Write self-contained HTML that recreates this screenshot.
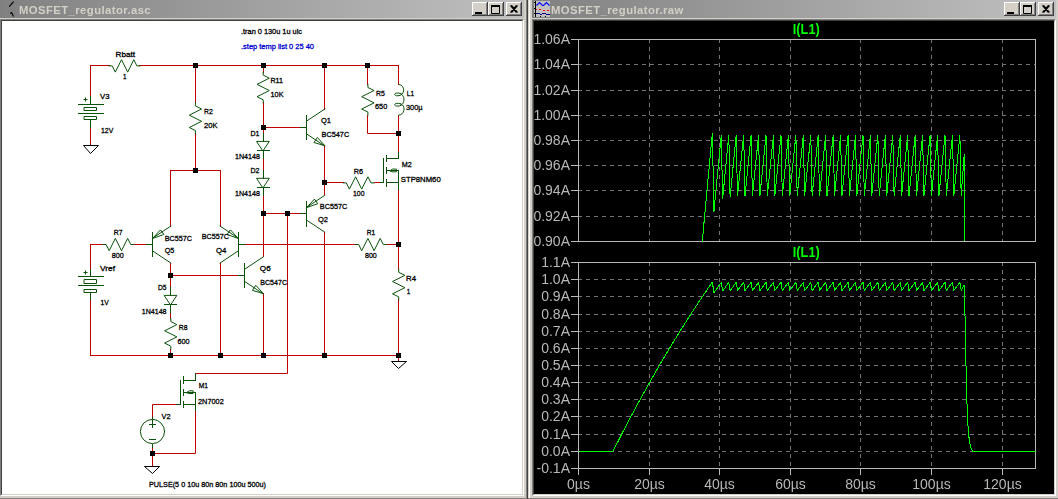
<!DOCTYPE html>
<html lang="en">
<head>
<meta charset="utf-8">
<title>LTspice IV - MOSFET_regulator</title>
<style>
html,body{margin:0;padding:0;}
body{width:1058px;height:499px;overflow:hidden;position:relative;background:#d4d0c8;font-family:"Liberation Sans",Arial,sans-serif;}
.abs{position:absolute;}
.tbar{position:absolute;top:0;height:18px;background:linear-gradient(to right,#808080 0%,#868686 8%,#c0c0c0 100%);}
.ttl{position:absolute;will-change:transform;top:3px;font-size:11.3px;line-height:14px;font-weight:bold;color:#d4d0c8;white-space:nowrap;letter-spacing:0.42px;}
.btn{position:absolute;top:2px;width:16px;height:14px;background:#d4d0c8;box-sizing:border-box;
 box-shadow:inset -1px -1px 0 #404040,inset 1px 1px 0 #fff,inset -2px -2px 0 #808080;}
.btn svg{position:absolute;left:0;top:0;}
.edge{position:absolute;box-sizing:border-box;border-style:solid;border-width:1px;}
.sch,.plt{position:absolute;left:0;top:0;display:block;}
</style>
</head>
<body>
<!-- ===== left MDI child: schematic ===== -->
<div class="tbar" style="left:0;width:524px;"></div>
<svg class="abs" style="left:0;top:0" width="18" height="18" viewBox="0 0 18 18"><path d="M13.6 1.6 L9.2 6.6 M10.2 13.4 L11.6 12.6 L13.6 16.4" stroke="#000" stroke-width="1.1" fill="none"/></svg>
<div class="ttl" style="left:19.2px;">MOSFET_regulator.asc</div>
<div class="btn" style="left:472px;"><svg width="16" height="14"><rect x="3" y="10" width="7" height="2" fill="#000"/></svg></div>
<div class="btn" style="left:488px;"><svg width="16" height="14"><path d="M3.5 3.5 H11.5 V11.5 H3.5 Z" stroke="#000" stroke-width="1" fill="none"/><rect x="3" y="3" width="9" height="2" fill="#000"/></svg></div>
<div class="btn" style="left:506px;"><svg width="16" height="14"><path d="M4.5 3.5 L10.5 10.5 M5.5 3.5 L11.5 10.5 M10.5 3.5 L4.5 10.5 M11.5 3.5 L5.5 10.5" stroke="#000" stroke-width="1.2" fill="none"/></svg></div>
<div class="edge" style="left:0;top:19px;width:524px;height:477px;border-color:#808080 #fff #fff #808080;"></div>
<div class="edge" style="left:1px;top:20px;width:522px;height:475px;border-color:#404040 #d4d0c8 #d4d0c8 #404040;background:#fff;"></div>
<div class="abs" style="left:2px;top:21px;width:520px;height:473px;background:#fff;overflow:hidden;">
<svg class="sch" width="520" height="473" viewBox="2 21 520 473">
<g fill="none" stroke="#c00000" stroke-width="1" stroke-linecap="square">
<path d="M90.5 65.5 L109.5 65.5"/>
<path d="M139.5 65.5 L398.5 65.5"/>
<path d="M90.5 65.5 L90.5 96.5"/>
<path d="M90.5 139.5 L90.5 145.5"/>
<path d="M90.5 127.5 L90.5 139.5"/>
<path d="M195.5 65.5 L195.5 102.5"/>
<path d="M195.5 133.5 L195.5 170.5"/>
<path d="M170.5 170.5 L220.5 170.5"/>
<path d="M170.5 170.5 L170.5 226.5"/>
<path d="M220.5 170.5 L220.5 226.5"/>
<path d="M263.5 65.5 L263.5 72.5"/>
<path d="M263.5 102.5 L263.5 133.5"/>
<path d="M263.5 127.5 L300.5 127.5"/>
<path d="M263.5 158.5 L263.5 170.5"/>
<path d="M263.5 195.5 L263.5 256.5"/>
<path d="M263.5 213.5 L300.5 213.5"/>
<path d="M287.5 213.5 L287.5 373.5 L195.5 373.5"/>
<path d="M324.5 65.5 L324.5 109.5"/>
<path d="M324.5 145.5 L324.5 195.5"/>
<path d="M324.5 182.5 L343.5 182.5"/>
<path d="M374.5 182.5 L380.5 182.5"/>
<path d="M324.5 232.5 L324.5 355.5"/>
<path d="M367.5 65.5 L367.5 84.5"/>
<path d="M367.5 115.5 L367.5 133.5 L398.5 133.5"/>
<path d="M398.5 65.5 L398.5 84.5"/>
<path d="M398.5 115.5 L398.5 152.5"/>
<path d="M398.5 189.5 L398.5 269.5"/>
<path d="M398.5 299.5 L398.5 355.5"/>
<path d="M398.5 355.5 L398.5 361.5"/>
<path d="M386.5 244.5 L398.5 244.5"/>
<path d="M244.5 244.5 L355.5 244.5"/>
<path d="M170.5 263.5 L170.5 287.5"/>
<path d="M170.5 275.5 L238.5 275.5"/>
<path d="M170.5 312.5 L170.5 318.5"/>
<path d="M170.5 349.5 L170.5 355.5"/>
<path d="M220.5 263.5 L220.5 355.5"/>
<path d="M263.5 293.5 L263.5 355.5"/>
<path d="M133.5 244.5 L146.5 244.5"/>
<path d="M90.5 244.5 L103.5 244.5"/>
<path d="M90.5 244.5 L90.5 269.5"/>
<path d="M90.5 299.5 L90.5 355.5"/>
<path d="M90.5 355.5 L398.5 355.5"/>
<path d="M176.5 404.5 L152.5 404.5 L152.5 417.5"/>
<path d="M152.5 447.5 L152.5 460.5"/>
<path d="M195.5 410.5 L195.5 453.5 L152.5 453.5"/>
<path d="M152.5 460.5 L152.5 466.5"/>
</g>
<g fill="none" stroke="#0a520a" stroke-width="1" stroke-linecap="square" stroke-linejoin="miter">
<path d="M109.2 65.9 L112.3 65.9 L115.3 72.1 L121.5 59.7 L127.7 72.1 L133.8 59.7 L136.9 65.9 L140.0 65.9 M90.5 96.5 L90.5 104.5 M78.5 104.5 L103.5 104.5 M84.5 107.5 L96.5 107.5 L96.5 110.5 L84.5 110.5 Z M78.5 113.5 L103.5 113.5 M84.5 116.5 L96.5 116.5 L96.5 119.5 L84.5 119.5 Z M90.5 119.5 L90.5 127.5 M84.0 99.5 L87.0 99.5 M85.5 98.0 L85.5 101.0 M195.4 102.9 L195.4 105.9 L201.6 109.0 L189.3 115.2 L201.6 121.3 L189.3 127.5 L195.4 130.6 L195.4 133.7 M263.2 72.1 L263.2 75.1 L269.3 78.2 L257.0 84.4 L269.3 90.5 L257.0 96.7 L263.2 99.8 L263.2 102.9 M263.5 133.5 L263.5 141.5 M263.5 150.5 L263.5 158.5 M257.0 141.4 L269.3 141.4 L263.2 150.6 Z M257.5 150.5 L269.5 150.5 M263.5 170.5 L263.5 178.5 M263.5 187.5 L263.5 195.5 M257.0 178.3 L269.3 178.3 L263.2 187.6 Z M257.5 187.5 L269.5 187.5 M306.5 115.5 L306.5 139.5 M300.5 127.5 L306.5 127.5 M306.3 121.3 L324.8 109.0 M306.3 133.7 L324.8 146.0 M317.1 137.9 L314.0 142.5 L324.4 145.6 Z M343.3 182.9 L346.3 182.9 L349.4 189.1 L355.6 176.8 L361.7 189.1 L367.9 176.8 L371.0 182.9 L374.1 182.9 M398.5 182.5 L398.5 189.5 M386.5 182.5 L398.5 182.5 M386.5 155.5 L386.5 161.5 M386.5 167.5 L386.5 173.5 M386.5 179.5 L386.5 186.5 M380.5 182.5 L383.5 182.5 M383.5 158.5 L383.5 182.5 M398.5 158.5 L386.5 158.5 M398.5 152.5 L398.5 158.5 M398.5 170.5 L398.5 182.5 M386.5 170.5 L398.5 170.5 M390.2 170.6 L392.5 169.1 L396.4 169.1 L396.4 171.8 L392.5 171.8 Z M306.5 226.5 L306.5 201.5 M300.5 213.5 L306.5 213.5 M306.3 219.9 L324.8 232.2 M306.3 207.6 L324.8 195.3 M307.1 207.2 L314.4 199.1 L317.5 203.3 Z M367.9 84.4 L367.9 87.5 L374.1 90.5 L361.7 96.7 L374.1 102.9 L361.7 109.0 L367.9 112.1 L367.9 115.2 M398.7 269.2 L398.7 272.3 L404.9 275.3 L392.5 281.5 L404.9 287.7 L392.5 293.8 L398.7 296.9 L398.7 300.0 M355.6 244.5 L358.7 244.5 L361.7 250.7 L367.9 238.4 L374.1 250.7 L380.2 238.4 L383.3 244.5 L386.4 244.5 M152.5 256.5 L152.5 232.5 M146.5 244.5 L152.5 244.5 M152.3 250.7 L170.8 263.0 M152.3 238.4 L170.8 226.1 M153.1 238.0 L160.4 229.9 L163.5 234.1 Z M170.5 287.5 L170.5 295.5 M170.5 304.5 L170.5 312.5 M164.6 295.4 L176.9 295.4 L170.8 304.6 Z M164.5 304.5 L176.5 304.5 M170.8 318.5 L170.8 321.5 L176.9 324.6 L164.6 330.8 L176.9 336.9 L164.6 343.1 L170.8 346.2 L170.8 349.3 M238.5 256.5 L238.5 232.5 M244.5 244.5 L238.5 244.5 M238.5 250.7 L220.1 263.0 M238.5 238.4 L220.1 226.1 M237.8 238.0 L230.5 229.9 L227.4 234.1 Z M244.5 263.5 L244.5 287.5 M238.5 275.5 L244.5 275.5 M244.7 269.2 L263.2 256.9 M244.7 281.5 L263.2 293.8 M255.5 285.7 L252.4 290.4 L262.8 293.4 Z M103.0 244.5 L106.1 244.5 L109.2 250.7 L115.3 238.4 L121.5 250.7 L127.7 238.4 L130.7 244.5 L133.8 244.5 M90.5 269.5 L90.5 276.5 M78.5 276.5 L103.5 276.5 M84.5 279.5 L96.5 279.5 L96.5 283.5 L84.5 283.5 Z M78.5 285.5 L103.5 285.5 M84.5 289.5 L96.5 289.5 L96.5 292.5 L84.5 292.5 Z M90.5 292.5 L90.5 299.5 M84.0 272.5 L87.0 272.5 M85.5 271.0 L85.5 274.0 M195.5 404.5 L195.5 410.5 M183.5 404.5 L195.5 404.5 M183.5 376.5 L183.5 383.5 M183.5 389.5 L183.5 395.5 M183.5 401.5 L183.5 407.5 M176.5 404.5 L180.5 404.5 M180.5 380.5 L180.5 404.5 M195.5 380.5 L183.5 380.5 M195.5 373.5 L195.5 380.5 M195.5 392.5 L195.5 404.5 M183.5 392.5 L195.5 392.5 M186.9 392.4 L189.3 390.8 L193.1 390.8 L193.1 393.5 L189.3 393.5 Z M152.5 417.5 L152.5 420.5 M152.5 444.5 L152.5 447.5 M149.5 424.5 L155.5 424.5 M152.5 421.5 L152.5 427.5 M149.5 439.5 L155.5 439.5"/>
<path d="M398.5 84.4 C405.5 84.9 405.5 95.6 398.0 95.8 C393.5 96.1 393.5 92.4 398.5 93.1 L401.5 93.6 M400.5 94.1 C405.5 95.1 405.5 105.9 398.0 106.1 C393.5 106.4 393.5 102.7 398.5 103.4 L401.5 103.9 M400.5 104.4 C405.5 104.4 405.5 114.7 398.5 115.2" stroke-linecap="butt"/>
<circle cx="152.5" cy="431.5" r="12.1"/>
</g>
<g fill="#fff" stroke="#000" stroke-width="1">
<path d="M83.5 145.5 L98.5 145.5 L90.5 153.5 Z"/>
<path d="M391.5 361.5 L406.5 361.5 L398.5 368.5 Z"/>
<path d="M144.5 466.5 L159.5 466.5 L152.5 473.5 Z"/>
</g>
<g fill="#000">
<rect x="193.0" y="63.0" width="5" height="5"/>
<rect x="261.0" y="63.0" width="5" height="5"/>
<rect x="322.0" y="63.0" width="5" height="5"/>
<rect x="365.0" y="63.0" width="5" height="5"/>
<rect x="193.0" y="168.0" width="5" height="5"/>
<rect x="261.0" y="125.0" width="5" height="5"/>
<rect x="261.0" y="211.0" width="5" height="5"/>
<rect x="285.0" y="211.0" width="5" height="5"/>
<rect x="322.0" y="180.0" width="5" height="5"/>
<rect x="396.0" y="131.0" width="5" height="5"/>
<rect x="396.0" y="242.0" width="5" height="5"/>
<rect x="396.0" y="353.0" width="5" height="5"/>
<rect x="168.0" y="273.0" width="5" height="5"/>
<rect x="168.0" y="353.0" width="5" height="5"/>
<rect x="218.0" y="353.0" width="5" height="5"/>
<rect x="261.0" y="353.0" width="5" height="5"/>
<rect x="322.0" y="353.0" width="5" height="5"/>
<rect x="150.0" y="451.0" width="5" height="5"/>
</g>
<g font-family="'Liberation Sans', Arial, sans-serif" stroke-width="0.3">
<text x="115.5" y="56.9" font-size="7.8" fill="#000" stroke="#000" text-anchor="start" textLength="19.5" lengthAdjust="spacingAndGlyphs">Rbatt</text>
<text x="123" y="78.9" font-size="7.8" fill="#000" stroke="#000" text-anchor="start" textLength="3.5" lengthAdjust="spacingAndGlyphs">1</text>
<text x="100" y="99.1" font-size="7.8" fill="#000" stroke="#000" text-anchor="start" textLength="9.5" lengthAdjust="spacingAndGlyphs">V3</text>
<text x="101" y="133.1" font-size="7.8" fill="#000" stroke="#000" text-anchor="start" textLength="12.2" lengthAdjust="spacingAndGlyphs">12V</text>
<text x="204" y="114.1" font-size="7.8" fill="#000" stroke="#000" text-anchor="start" textLength="8.7" lengthAdjust="spacingAndGlyphs">R2</text>
<text x="204" y="128.2" font-size="7.8" fill="#000" stroke="#000" text-anchor="start" textLength="13.5" lengthAdjust="spacingAndGlyphs">20K</text>
<text x="270.5" y="83.1" font-size="7.8" fill="#000" stroke="#000" text-anchor="start" textLength="12.5" lengthAdjust="spacingAndGlyphs">R11</text>
<text x="270.5" y="97.1" font-size="7.8" fill="#000" stroke="#000" text-anchor="start" textLength="13" lengthAdjust="spacingAndGlyphs">10K</text>
<text x="376" y="95.9" font-size="7.8" fill="#000" stroke="#000" text-anchor="start" textLength="8.8" lengthAdjust="spacingAndGlyphs">R5</text>
<text x="375" y="109.1" font-size="7.8" fill="#000" stroke="#000" text-anchor="start" textLength="12.2" lengthAdjust="spacingAndGlyphs">650</text>
<text x="406.8" y="95.9" font-size="7.8" fill="#000" stroke="#000" text-anchor="start" textLength="7.2" lengthAdjust="spacingAndGlyphs">L1</text>
<text x="406" y="110.4" font-size="7.8" fill="#000" stroke="#000" text-anchor="start" textLength="16.6" lengthAdjust="spacingAndGlyphs">300µ</text>
<text x="321" y="123.1" font-size="7.8" fill="#000" stroke="#000" text-anchor="start" textLength="10" lengthAdjust="spacingAndGlyphs">Q1</text>
<text x="321.5" y="136.9" font-size="7.8" fill="#000" stroke="#000" text-anchor="start" textLength="27.7" lengthAdjust="spacingAndGlyphs">BC547C</text>
<text x="259.5" y="135.9" font-size="7.8" fill="#000" stroke="#000" text-anchor="end" textLength="9" lengthAdjust="spacingAndGlyphs">D1</text>
<text x="260" y="159.4" font-size="7.8" fill="#000" stroke="#000" text-anchor="end" textLength="25" lengthAdjust="spacingAndGlyphs">1N4148</text>
<text x="259.5" y="172.7" font-size="7.8" fill="#000" stroke="#000" text-anchor="end" textLength="9" lengthAdjust="spacingAndGlyphs">D2</text>
<text x="260" y="196.1" font-size="7.8" fill="#000" stroke="#000" text-anchor="end" textLength="25" lengthAdjust="spacingAndGlyphs">1N4148</text>
<text x="353.7" y="174.1" font-size="7.8" fill="#000" stroke="#000" text-anchor="start" textLength="9.3" lengthAdjust="spacingAndGlyphs">R6</text>
<text x="353" y="196.1" font-size="7.8" fill="#000" stroke="#000" text-anchor="start" textLength="11.5" lengthAdjust="spacingAndGlyphs">100</text>
<text x="401.8" y="167.2" font-size="7.8" fill="#000" stroke="#000" text-anchor="start" textLength="10" lengthAdjust="spacingAndGlyphs">M2</text>
<text x="400.8" y="182.2" font-size="7.8" fill="#000" stroke="#000" text-anchor="start" textLength="39.9" lengthAdjust="spacingAndGlyphs">STP8NM60</text>
<text x="319.8" y="209.1" font-size="7.8" fill="#000" stroke="#000" text-anchor="start" textLength="27.5" lengthAdjust="spacingAndGlyphs">BC557C</text>
<text x="318" y="222.1" font-size="7.8" fill="#000" stroke="#000" text-anchor="start" textLength="10" lengthAdjust="spacingAndGlyphs">Q2</text>
<text x="113.8" y="235.2" font-size="7.8" fill="#000" stroke="#000" text-anchor="start" textLength="8.7" lengthAdjust="spacingAndGlyphs">R7</text>
<text x="111.8" y="257.7" font-size="7.8" fill="#000" stroke="#000" text-anchor="start" textLength="12" lengthAdjust="spacingAndGlyphs">800</text>
<text x="366.8" y="235.4" font-size="7.8" fill="#000" stroke="#000" text-anchor="start" textLength="8.5" lengthAdjust="spacingAndGlyphs">R1</text>
<text x="365" y="257.7" font-size="7.8" fill="#000" stroke="#000" text-anchor="start" textLength="11.8" lengthAdjust="spacingAndGlyphs">800</text>
<text x="164.7" y="241.1" font-size="7.8" fill="#000" stroke="#000" text-anchor="start" textLength="27.3" lengthAdjust="spacingAndGlyphs">BC557C</text>
<text x="164.7" y="252.9" font-size="7.8" fill="#000" stroke="#000" text-anchor="start" textLength="9.6" lengthAdjust="spacingAndGlyphs">Q5</text>
<text x="201.7" y="238.7" font-size="7.8" fill="#000" stroke="#000" text-anchor="start" textLength="27.3" lengthAdjust="spacingAndGlyphs">BC557C</text>
<text x="216" y="252.9" font-size="7.8" fill="#000" stroke="#000" text-anchor="start" textLength="10.4" lengthAdjust="spacingAndGlyphs">Q4</text>
<text x="259.8" y="270.9" font-size="7.8" fill="#000" stroke="#000" text-anchor="start" textLength="10.9" lengthAdjust="spacingAndGlyphs">Q6</text>
<text x="260.3" y="285.4" font-size="7.8" fill="#000" stroke="#000" text-anchor="start" textLength="26.7" lengthAdjust="spacingAndGlyphs">BC547C</text>
<text x="100" y="271.3" font-size="7.8" fill="#000" stroke="#000" text-anchor="start" textLength="15" lengthAdjust="spacingAndGlyphs">Vref</text>
<text x="100.5" y="305.1" font-size="7.8" fill="#000" stroke="#000" text-anchor="start" textLength="8.2" lengthAdjust="spacingAndGlyphs">1V</text>
<text x="158" y="290.1" font-size="7.8" fill="#000" stroke="#000" text-anchor="start" textLength="8.5" lengthAdjust="spacingAndGlyphs">D5</text>
<text x="141.8" y="313.9" font-size="7.8" fill="#000" stroke="#000" text-anchor="start" textLength="24.7" lengthAdjust="spacingAndGlyphs">1N4148</text>
<text x="178.8" y="330.1" font-size="7.8" fill="#000" stroke="#000" text-anchor="start" textLength="8.7" lengthAdjust="spacingAndGlyphs">R8</text>
<text x="177.5" y="343.9" font-size="7.8" fill="#000" stroke="#000" text-anchor="start" textLength="12" lengthAdjust="spacingAndGlyphs">600</text>
<text x="406" y="280.9" font-size="7.8" fill="#000" stroke="#000" text-anchor="start" textLength="10" lengthAdjust="spacingAndGlyphs">R4</text>
<text x="406.8" y="293.9" font-size="7.8" fill="#000" stroke="#000" text-anchor="start" textLength="3.5" lengthAdjust="spacingAndGlyphs">1</text>
<text x="198.8" y="388.2" font-size="7.8" fill="#000" stroke="#000" text-anchor="start" textLength="9.2" lengthAdjust="spacingAndGlyphs">M1</text>
<text x="198" y="404.1" font-size="7.8" fill="#000" stroke="#000" text-anchor="start" textLength="25.8" lengthAdjust="spacingAndGlyphs">2N7002</text>
<text x="161.5" y="419.1" font-size="7.8" fill="#000" stroke="#000" text-anchor="start" textLength="9" lengthAdjust="spacingAndGlyphs">V2</text>
<text x="241" y="33.9" font-size="7.8" fill="#000" stroke="#000" text-anchor="start" textLength="61" lengthAdjust="spacingAndGlyphs">.tran 0 130u 1u uic</text>
<text x="241" y="48.9" font-size="7.8" fill="#0000d0" stroke="#0000d0" text-anchor="start" textLength="73" lengthAdjust="spacingAndGlyphs">.step temp list 0 25 40</text>
<text x="149" y="487.1" font-size="7.8" fill="#000" stroke="#000" text-anchor="start" textLength="117" lengthAdjust="spacingAndGlyphs">PULSE(5 0 10u 80n 80n 100u 500u)</text>
</g>
</svg>
</div>
<div class="abs" style="left:526px;top:0;width:1px;height:499px;background:#808080;"></div>
<div class="abs" style="left:527px;top:0;width:1px;height:499px;background:#404040;"></div>
<div class="abs" style="left:0;top:498px;width:527px;height:1px;background:#808080;"></div>
<!-- ===== right MDI child: waveform viewer ===== -->
<div class="abs" style="left:529px;top:0;width:1px;height:498px;background:#fff;"></div>
<div class="tbar" style="left:532px;width:524px;"></div>
<svg class="abs" style="left:534px;top:1px" width="16" height="16" viewBox="0 0 16 16" shape-rendering="crispEdges">
<rect x="0" y="0" width="16" height="16" fill="#c0c0c0"/>
<rect x="1" y="0" width="1" height="16" fill="#000"/>
<path d="M0 1.5h1M0 7.5h1M0 12.5h1" stroke="#000"/>
<path d="M2.5 4.5 L5.5 1.5 L8.5 4.5 L9.5 4.5 L12.5 1.5 L15.5 4.5" stroke="#0000ff" fill="none" shape-rendering="auto" stroke-width="1.2"/>
<path d="M2 8.5h1M5 8.5h2M9 9.5h2M13 9.5h2" stroke="#ff0000"/>
<path d="M2 12.5h4M6 13.5h2M8 12.5h4M12 13.5h4" stroke="#000080"/>
<path d="M6 15.5h1M11 15.5h1" stroke="#000"/>
</svg>
<div class="ttl" style="left:550.5px;">MOSFET_regulator.raw</div>
<div class="btn" style="left:1004px;"><svg width="16" height="14"><rect x="3" y="10" width="7" height="2" fill="#000"/></svg></div>
<div class="btn" style="left:1020px;"><svg width="16" height="14"><path d="M3.5 3.5 H11.5 V11.5 H3.5 Z" stroke="#000" stroke-width="1" fill="none"/><rect x="3" y="3" width="9" height="2" fill="#000"/></svg></div>
<div class="btn" style="left:1038px;"><svg width="16" height="14"><path d="M4.5 3.5 L10.5 10.5 M5.5 3.5 L11.5 10.5 M10.5 3.5 L4.5 10.5 M11.5 3.5 L5.5 10.5" stroke="#000" stroke-width="1.2" fill="none"/></svg></div>
<div class="edge" style="left:532px;top:19px;width:524px;height:477px;border-color:#808080 #fff #fff #808080;"></div>
<div class="edge" style="left:533px;top:20px;width:522px;height:475px;border-color:#404040 #d4d0c8 #d4d0c8 #404040;background:#000;"></div>
<div class="abs" style="left:534px;top:21px;width:520px;height:473px;background:#000;overflow:hidden;will-change:transform;">
<svg class="plt" width="520" height="473" viewBox="534 21 520 473">
<g stroke="#747474" stroke-width="1" stroke-dasharray="4 4" shape-rendering="crispEdges">
<line x1="578" y1="64.5" x2="1035" y2="64.5"/>
<line x1="578" y1="90.5" x2="1035" y2="90.5"/>
<line x1="578" y1="115.5" x2="1035" y2="115.5"/>
<line x1="578" y1="140.5" x2="1035" y2="140.5"/>
<line x1="578" y1="165.5" x2="1035" y2="165.5"/>
<line x1="578" y1="190.5" x2="1035" y2="190.5"/>
<line x1="578" y1="216.5" x2="1035" y2="216.5"/>
<line x1="649.5" y1="39" x2="649.5" y2="241"/>
<line x1="719.5" y1="39" x2="719.5" y2="241"/>
<line x1="790.5" y1="39" x2="790.5" y2="241"/>
<line x1="860.5" y1="39" x2="860.5" y2="241"/>
<line x1="931.5" y1="39" x2="931.5" y2="241"/>
<line x1="1002.5" y1="39" x2="1002.5" y2="241"/>
</g>
<g stroke="#b8b8b8" stroke-width="1" fill="none" shape-rendering="crispEdges">
<rect x="578.5" y="39.5" width="457" height="202"/>
<line x1="571" y1="39.5" x2="578" y2="39.5"/>
<line x1="571" y1="64.5" x2="578" y2="64.5"/>
<line x1="571" y1="90.5" x2="578" y2="90.5"/>
<line x1="571" y1="115.5" x2="578" y2="115.5"/>
<line x1="571" y1="140.5" x2="578" y2="140.5"/>
<line x1="571" y1="165.5" x2="578" y2="165.5"/>
<line x1="571" y1="190.5" x2="578" y2="190.5"/>
<line x1="571" y1="216.5" x2="578" y2="216.5"/>
<line x1="571" y1="241.5" x2="578" y2="241.5"/>
</g>
<g font-family="'Liberation Sans', Arial, sans-serif" font-size="14" fill="#b8b8b8" text-anchor="end">
<text x="570" y="44.4">1.06A</text>
<text x="570" y="69.4">1.04A</text>
<text x="570" y="95.4">1.02A</text>
<text x="570" y="120.4">1.00A</text>
<text x="570" y="145.4">0.98A</text>
<text x="570" y="170.4">0.96A</text>
<text x="570" y="195.4">0.94A</text>
<text x="570" y="221.4">0.92A</text>
<text x="570" y="246.4">0.90A</text>
</g>
<text x="806.3" y="34" font-family="'Liberation Sans', Arial, sans-serif" font-size="14" font-weight="bold" fill="#00ff00" text-anchor="middle" textLength="27" lengthAdjust="spacingAndGlyphs">I(L1)</text>
<g fill="none" stroke="#00ff00" stroke-width="1" stroke-linejoin="bevel" shape-rendering="crispEdges">
<polyline points="702.3,241.5 702.5,239.5 704.1,221.5 705.8,203.5 707.4,185.7 709.1,167.9 710.7,150.2 712.4,132.7 713.9,211.8 721.3,134.9 722.6,199.2 728.8,134.9 730.1,197.4 736.2,134.9 737.5,195.7 743.7,134.9 745.0,195.7 751.1,134.9 752.4,195.7 758.6,134.9 759.9,195.7 766.0,134.9 767.3,195.7 773.5,134.9 774.8,195.7 781.0,134.9 782.3,195.7 788.4,134.9 789.7,195.7 795.9,134.9 797.2,195.7 803.3,134.9 804.6,195.7 810.8,134.9 812.1,195.7 818.2,134.9 819.5,195.7 825.7,134.9 827.0,195.7 833.2,134.9 834.5,195.7 840.6,134.9 841.9,195.7 848.1,134.9 849.4,195.7 855.5,134.9 856.8,195.7 863.0,134.9 864.3,195.7 870.4,134.9 871.7,195.7 877.9,134.9 879.2,195.7 885.4,134.9 886.7,195.7 892.8,134.9 894.1,195.7 900.3,134.9 901.6,195.7 907.7,134.9 909.0,195.7 915.2,134.9 916.5,195.7 922.6,134.9 923.9,195.7 930.1,134.9 931.4,195.7 937.6,134.9 938.9,195.7 945.0,134.9 946.3,195.7 952.5,134.9 953.8,195.7 959.9,134.9 961.2,195.7 964.2,154.4 964.6,241.5"/>
</g>
<g stroke="#747474" stroke-width="1" stroke-dasharray="4 4" shape-rendering="crispEdges">
<line x1="578" y1="279.5" x2="1035" y2="279.5"/>
<line x1="578" y1="296.5" x2="1035" y2="296.5"/>
<line x1="578" y1="314.5" x2="1035" y2="314.5"/>
<line x1="578" y1="331.5" x2="1035" y2="331.5"/>
<line x1="578" y1="348.5" x2="1035" y2="348.5"/>
<line x1="578" y1="365.5" x2="1035" y2="365.5"/>
<line x1="578" y1="382.5" x2="1035" y2="382.5"/>
<line x1="578" y1="399.5" x2="1035" y2="399.5"/>
<line x1="578" y1="416.5" x2="1035" y2="416.5"/>
<line x1="578" y1="434.5" x2="1035" y2="434.5"/>
<line x1="578" y1="451.5" x2="1035" y2="451.5"/>
<line x1="649.5" y1="262" x2="649.5" y2="468"/>
<line x1="719.5" y1="262" x2="719.5" y2="468"/>
<line x1="790.5" y1="262" x2="790.5" y2="468"/>
<line x1="860.5" y1="262" x2="860.5" y2="468"/>
<line x1="931.5" y1="262" x2="931.5" y2="468"/>
<line x1="1002.5" y1="262" x2="1002.5" y2="468"/>
</g>
<g stroke="#b8b8b8" stroke-width="1" fill="none" shape-rendering="crispEdges">
<rect x="578.5" y="262.5" width="457" height="206"/>
<line x1="571" y1="262.5" x2="578" y2="262.5"/>
<line x1="571" y1="279.5" x2="578" y2="279.5"/>
<line x1="571" y1="296.5" x2="578" y2="296.5"/>
<line x1="571" y1="314.5" x2="578" y2="314.5"/>
<line x1="571" y1="331.5" x2="578" y2="331.5"/>
<line x1="571" y1="348.5" x2="578" y2="348.5"/>
<line x1="571" y1="365.5" x2="578" y2="365.5"/>
<line x1="571" y1="382.5" x2="578" y2="382.5"/>
<line x1="571" y1="399.5" x2="578" y2="399.5"/>
<line x1="571" y1="416.5" x2="578" y2="416.5"/>
<line x1="571" y1="434.5" x2="578" y2="434.5"/>
<line x1="571" y1="451.5" x2="578" y2="451.5"/>
<line x1="571" y1="468.5" x2="578" y2="468.5"/>
</g>
<g font-family="'Liberation Sans', Arial, sans-serif" font-size="14" fill="#b8b8b8" text-anchor="end">
<text x="570" y="267.4">1.1A</text>
<text x="570" y="284.4">1.0A</text>
<text x="570" y="301.4">0.9A</text>
<text x="570" y="319.4">0.8A</text>
<text x="570" y="336.4">0.7A</text>
<text x="570" y="353.4">0.6A</text>
<text x="570" y="370.4">0.5A</text>
<text x="570" y="387.4">0.4A</text>
<text x="570" y="404.4">0.3A</text>
<text x="570" y="421.4">0.2A</text>
<text x="570" y="439.4">0.1A</text>
<text x="570" y="456.4">0.0A</text>
<text x="570" y="473.4">-0.1A</text>
</g>
<text x="806.3" y="257" font-family="'Liberation Sans', Arial, sans-serif" font-size="14" font-weight="bold" fill="#00ff00" text-anchor="middle" textLength="27" lengthAdjust="spacingAndGlyphs">I(L1)</text>
<g fill="none" stroke="#00ff00" stroke-width="1" stroke-linejoin="bevel" shape-rendering="crispEdges">
<polyline points="578.5,451.3 613.0,451.3 614.7,448.0 616.3,444.7 618.0,441.5 619.6,438.2 621.3,435.0 622.9,431.8 624.6,428.6 626.3,425.4 627.9,422.2 629.6,419.1 631.2,416.0 632.9,412.9 634.5,409.8 636.2,406.7 637.9,403.6 639.5,400.6 641.2,397.6 642.8,394.6 644.5,391.6 646.1,388.6 647.8,385.6 649.4,382.7 651.1,379.8 652.8,376.9 654.4,374.0 656.1,371.1 657.7,368.2 659.4,365.4 661.0,362.5 662.7,359.7 664.4,356.9 666.0,354.1 667.7,351.4 669.3,348.6 671.0,345.9 672.6,343.1 674.3,340.4 676.0,337.7 677.6,335.1 679.3,332.4 680.9,329.7 682.6,327.1 684.2,324.5 685.9,321.9 687.5,319.3 689.2,316.7 690.9,314.1 692.5,311.6 694.2,309.0 695.8,306.5 697.5,304.0 699.1,301.5 700.8,299.0 702.5,296.6 704.1,294.1 705.8,291.7 707.4,289.2 709.1,286.8 710.7,284.4 712.4,282.0 713.9,292.8 721.3,282.3 722.6,291.1 728.8,282.3 730.1,290.8 736.2,282.3 737.5,290.6 743.7,282.3 745.0,290.6 751.1,282.3 752.4,290.6 758.6,282.3 759.9,290.6 766.0,282.3 767.3,290.6 773.5,282.3 774.8,290.6 781.0,282.3 782.3,290.6 788.4,282.3 789.7,290.6 795.9,282.3 797.2,290.6 803.3,282.3 804.6,290.6 810.8,282.3 812.1,290.6 818.2,282.3 819.5,290.6 825.7,282.3 827.0,290.6 833.2,282.3 834.5,290.6 840.6,282.3 841.9,290.6 848.1,282.3 849.4,290.6 855.5,282.3 856.8,290.6 863.0,282.3 864.3,290.6 870.4,282.3 871.7,290.6 877.9,282.3 879.2,290.6 885.4,282.3 886.7,290.6 892.8,282.3 894.1,290.6 900.3,282.3 901.6,290.6 907.7,282.3 909.0,290.6 915.2,282.3 916.5,290.6 922.6,282.3 923.9,290.6 930.1,282.3 931.4,290.6 937.6,282.3 938.9,290.6 945.0,282.3 946.3,290.6 952.5,282.3 953.8,290.6 959.9,282.3 961.2,290.6 964.2,285.0 964.4,288.2 964.6,300.3 965.2,322.6 966.0,365.5 967.2,411.0 968.2,429.0 969.2,439.3 970.2,445.3 971.2,448.8 972.5,451.3 1035.5,451.3"/>
</g>
<g stroke="#b8b8b8" stroke-width="1" shape-rendering="crispEdges">
<line x1="578.5" y1="468" x2="578.5" y2="475"/>
<line x1="649.5" y1="468" x2="649.5" y2="475"/>
<line x1="719.5" y1="468" x2="719.5" y2="475"/>
<line x1="790.5" y1="468" x2="790.5" y2="475"/>
<line x1="860.5" y1="468" x2="860.5" y2="475"/>
<line x1="931.5" y1="468" x2="931.5" y2="475"/>
<line x1="1002.5" y1="468" x2="1002.5" y2="475"/>
</g>
<g font-family="'Liberation Sans', Arial, sans-serif" font-size="14" fill="#b8b8b8" text-anchor="middle">
<text x="578.5" y="489">0µs</text>
<text x="649.5" y="489">20µs</text>
<text x="719.5" y="489">40µs</text>
<text x="790.5" y="489">60µs</text>
<text x="860.5" y="489">80µs</text>
<text x="931.5" y="489">100µs</text>
<text x="1002.5" y="489">120µs</text>
</g>
</svg>
</div>
<div class="abs" style="left:528px;top:498px;width:530px;height:1px;background:#808080;"></div>
</body>
</html>
